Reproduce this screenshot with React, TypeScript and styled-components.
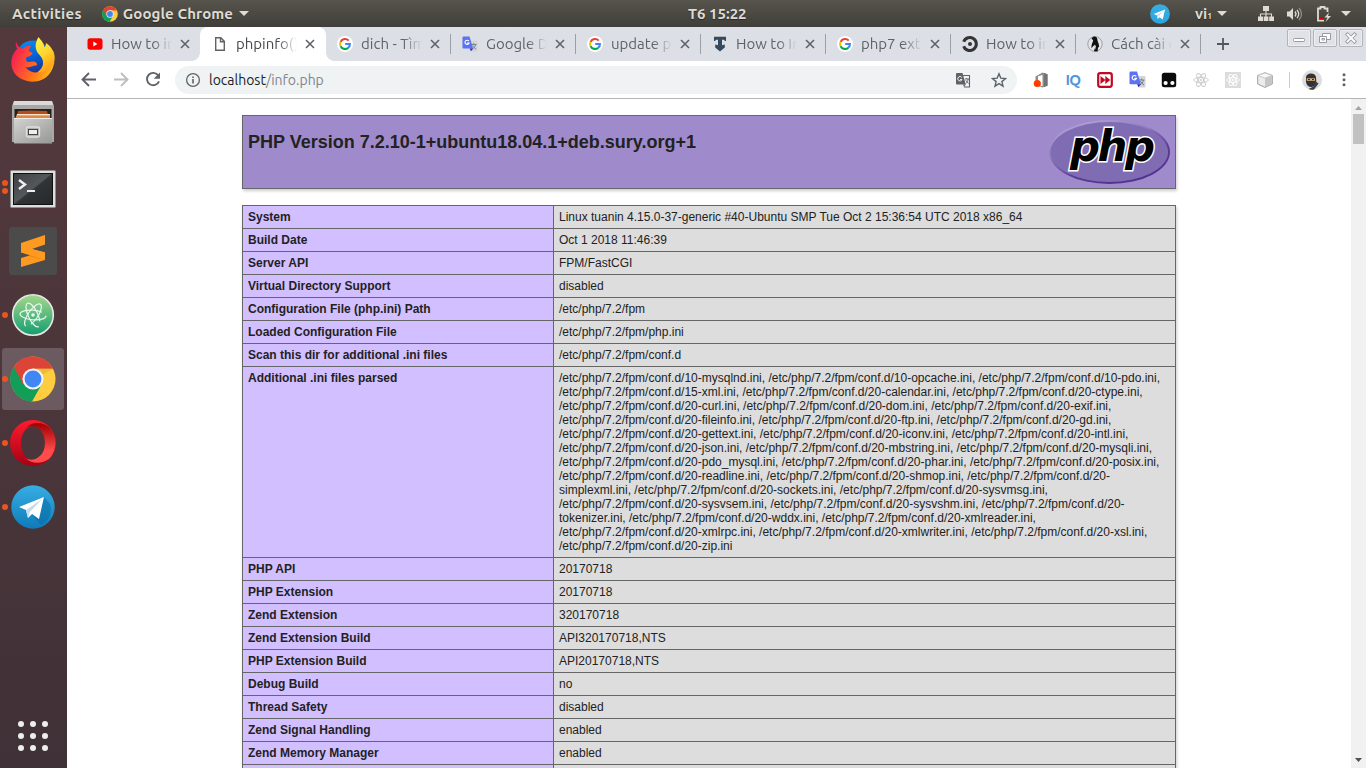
import React from 'react';
import styled, { createGlobalStyle } from 'styled-components';

const UI_FONT = '"Ubuntu", "Noto Sans", "Open Sans", sans-serif';

const GlobalStyle = createGlobalStyle`
  * { box-sizing: border-box; }
  html, body { margin: 0; padding: 0; }
  body { width: 1366px; height: 768px; overflow: hidden; background: #fff; }
  svg { display: block; flex: none; }
`;

const Desktop = styled.div`
  display: flex;
  flex-direction: column;
  width: 1366px;
  height: 768px;
  overflow: hidden;
  font-family: ${UI_FONT};
`;

/* ---------- top bar ---------- */
const TopBar = styled.header`
  display: flex;
  align-items: center;
  height: 27px;
  flex: none;
  padding: 0 15px 0 12px;
  color: #dfdbd2;
  font-size: 15px;
  font-weight: 700;
  line-height: 26px;
  background: linear-gradient(#57544d, #3f3e39);
  text-shadow: 0 1px 1px #2a2925;
`;
const BarLeft = styled.div`
  display: flex;
  align-items: center;
  width: 676px;
`;
const BarLabel = styled.span<{ $track?: number; $left?: number; $right?: number }>`
  letter-spacing: ${p => p.$track ?? 0}px;
  margin-left: ${p => p.$left ?? 0}px;
  margin-right: ${p => p.$right ?? 0}px;
  white-space: nowrap;
`;
const BarRight = styled.div`
  display: flex;
  align-items: center;
  margin-left: auto;
`;
const TrayIcon = styled.span<{ $left: number; $right?: number }>`
  margin: 0 ${p => p.$right ?? 0}px 0 ${p => p.$left}px;
`;
const Caret = styled.i`
  width: 0;
  height: 0;
  border: 5px solid transparent;
  border-top-color: #dfdbd2;
  border-bottom: 0;
`;
const InputLabel = styled.span`
  width: 18px;
  margin: 2px 4px 0 25px;
  font-size: 15px;
  white-space: nowrap;
`;
const Subscript = styled.small`
  font-size: 8.5px;
`;

/* ---------- dock ---------- */
const Workspace = styled.div`
  display: flex;
  flex: 1;
  min-height: 0;
`;
const Dock = styled.nav`
  display: flex;
  flex-direction: column;
  width: 67px;
  flex: none;
  gap: 2px;
  padding: 1px 0 1px 2px;
  background: linear-gradient(#54393c, #4e373b 30%, #49353a 60%, #3f3137);
`;
const DockItem = styled.div<{ $active?: boolean; $drop?: number }>`
  position: relative;
  display: flex;
  align-items: center;
  justify-content: center;
  width: 62px;
  height: 62px;
  padding-top: ${p => p.$drop ?? 0}px;
  border-radius: 3px;
  background: ${p => (p.$active ? '#6b5a5f' : 'transparent')};
`;
const Pips = styled.div`
  position: absolute;
  left: 0;
  top: 0;
  height: 100%;
  display: flex;
  flex-direction: column;
  justify-content: center;
  gap: 2px;
`;
const Pip = styled.i`
  width: 6px;
  height: 6px;
  border-radius: 50%;
  background: #e95420;
`;
const AppGrid = styled.div`
  display: grid;
  grid-template-columns: repeat(3, 6px);
  gap: 6px;
  margin: auto 0 16px 16px;
`;
const GridDot = styled.i`
  width: 6px;
  height: 6px;
  border-radius: 50%;
  background: #eeeeec;
`;

/* ---------- browser ---------- */
const Browser = styled.main`
  display: flex;
  flex-direction: column;
  flex: 1;
  min-width: 0;
`;
const TabStrip = styled.div`
  display: flex;
  height: 34px;
  flex: none;
  padding-left: 9px;
  background: #dcdfe6;
`;
const Tab = styled.div<{ $active?: boolean; $line?: boolean }>`
  position: relative;
  display: flex;
  align-items: center;
  width: 125px;
  flex: none;
  padding-left: 11px;
  color: ${p => (p.$active ? '#45494d' : '#5f6368')};
  background: ${p => (p.$active ? '#fff' : 'transparent')};
  box-shadow: ${p => (p.$active ? '-1px 0 0 #fff' : 'none')};
  border-radius: 8px 8px 0 0;
  &::before {
    content: '';
    display: ${p => (p.$active ? 'block' : 'none')};
    position: absolute;
    left: -9px;
    bottom: 0;
    width: 142px;
    height: 8px;
    background:
      radial-gradient(circle at 0 0, transparent 7.5px, #fff 8px) left / 8px 8px no-repeat,
      radial-gradient(circle at 100% 0, transparent 7.5px, #fff 8px) right / 8px 8px no-repeat;
  }
  &::after {
    content: '';
    display: ${p => (p.$line ? 'block' : 'none')};
    position: absolute;
    right: 0;
    top: 7px;
    width: 1px;
    height: 20px;
    background: #9a9ea6;
  }
`;
const TabTitle = styled.span`
  width: 62px;
  margin-left: 8px;
  overflow: hidden;
  white-space: nowrap;
  font-size: 15px;
  line-height: 20px;
  mask-image: linear-gradient(90deg, #000 42px, transparent 61px);
`;
const CloseMark = styled.svg`
  margin-left: 7px;
`;
const NewTab = styled.svg`
  margin: 11px 0 0 16px;
`;
const WindowButtons = styled.div`
  display: flex;
  gap: 2px;
  margin: 2px 3px 0 auto;
`;
const WindowButton = styled.div`
  display: flex;
  align-items: center;
  justify-content: center;
  width: 24px;
  height: 18px;
  border: 1px solid #b2b4ba;
  border-radius: 2px;
  background: #e0e2e8;
  box-shadow: inset 0 0 0 1px #eceef2;
`;
const Toolbar = styled.div`
  display: flex;
  align-items: center;
  height: 38px;
  flex: none;
  border-bottom: 1px solid #b4b5b7;
  background: #fff;
`;
const NavButtons = styled.div`
  display: flex;
  gap: 12px;
  width: 108px;
  padding-left: 12px;
`;
const AddressBar = styled.div`
  display: flex;
  align-items: center;
  width: 842px;
  height: 28px;
  border-radius: 14px;
  padding: 0 10px;
  background: #eff3f4;
`;
const Url = styled.span`
  flex: 1;
  margin-left: 8px;
  font-size: 14px;
  line-height: 20px;
  color: #202124;
  white-space: nowrap;
`;
const UrlPath = styled.span`
  color: #80868b;
`;
const StarSlot = styled.div`
  margin-left: 20px;
`;
const Extensions = styled.div`
  display: flex;
  margin-left: 8px;
`;
const ExtensionSlot = styled.div`
  display: flex;
  align-items: center;
  justify-content: center;
  width: 32px;
  height: 22px;
`;
const ExtLetters = styled.span`
  color: #5294da;
  font: 700 15px/20px ${UI_FONT};
  letter-spacing: -0.6px;
`;
const Divider = styled.i`
  width: 1px;
  height: 16px;
  margin: 0 12px 0 8px;
  background: #c9cbcf;
`;
const MenuSlot = styled.div`
  margin-left: 14px;
`;

/* ---------- page ---------- */
const Viewport = styled.div`
  display: flex;
  flex: 1;
  min-height: 0;
  overflow: hidden;
`;
const Page = styled.div`
  display: flex;
  flex-direction: column;
  align-items: center;
  flex: 1;
  gap: 16px;
  padding-top: 16px;
  overflow: hidden;
  background: #fff;
  color: #222;
  font: 12px/14px "Liberation Sans", Arial, sans-serif;
`;
const PhpHeader = styled.div`
  display: flex;
  justify-content: space-between;
  width: 934px;
  height: 74px;
  flex: none;
  padding: 4px 5px;
  border: 1px solid #666;
  background: #9f8bcb;
  box-shadow: 1px 2px 3px #ccc;
`;
const PhpTitle = styled.h1`
  margin: 12px 0 0;
  font-size: 18px;
  line-height: 20px;
`;
const InfoTable = styled.table`
  width: 934px;
  flex: none;
  table-layout: fixed;
  border-collapse: collapse;
  box-shadow: 1px 2px 3px #ccc;
`;
const KeyCell = styled.td`
  width: 311px;
  padding: 4px 5px;
  border: 1px solid #666;
  vertical-align: top;
  font-weight: 700;
  background: #d2bfff;
`;
const ValueCell = styled.td`
  padding: 4px 5px;
  border: 1px solid #666;
  vertical-align: top;
  background: #ddd;
  overflow-wrap: break-word;
`;
const Scrollbar = styled.div`
  display: flex;
  flex-direction: column;
  align-items: center;
  width: 15px;
  background: #f1f1f1;
`;
const ScrollThumb = styled.div`
  width: 11px;
  height: 30px;
  margin: 4px 0 auto;
  background: #c1c1c1;
`;
const ScrollArrow = styled.i<{ $down?: boolean }>`
  width: 7px;
  height: 4px;
  margin: ${p => (p.$down ? '0 0 6px' : '7px 0 0')};
  background: ${p => (p.$down ? '#505050' : '#a3a3a3')};
  clip-path: ${p => (p.$down ? 'polygon(0 0, 100% 0, 50% 100%)' : 'polygon(0 100%, 100% 100%, 50% 0)')};
`;

/* ---------- drawings ---------- */
const ChromeIcon = ({ size }: { size: number }) => (
  <svg width={size} height={size} viewBox="0 0 48 48">
    <circle cx="24" cy="24" r="23.5" fill="#fdcc3f" />
    <path d="M24 24 4 11.5A23.5 23.5 0 0 0 23 47.5L34 28z" fill="#129d58" />
    <path d="M24 24 4 11.5A23.5 23.5 0 0 1 45 13.4H24z" fill="#dc4437" />
    <path d="M4 11.500 24 13.400 14 30z" fill="#dc4437" />
    <path d="M24 13.400H45L34.500 19z" fill="#e2b02f" opacity=".6" />
    <circle cx="24" cy="24" r="11" fill="#f3f3f3" />
    <circle cx="24" cy="24" r="8.800" fill="#4285f4" />
  </svg>
);

const TelegramIcon = ({ size, id }: { size: number; id: string }) => (
  <svg width={size} height={size} viewBox="0 0 44 44">
    <defs>
      <linearGradient id={id} x1="0" y1="0" x2="0" y2="1">
        <stop offset="0" stopColor="#37aee2" />
        <stop offset="1" stopColor={size > 30 ? '#0e7bb8' : '#2ca5e0'} />
      </linearGradient>
    </defs>
    <circle cx="22" cy="22" r="21.700" fill={`url(#${id})`} />
    {size > 30 && <path d="M33 12l6 7c3 10-3 19-9 21l-9-10z" fill="#076da8" opacity=".55" />}
    <path d="M8 22 33 12 28 34 21 29 17 33 15 25z" fill="#fff" />
    <path d="M15 25 31 14 19 27 17 33z" fill="#c5dcea" />
  </svg>
);

const GoogleIcon = () => (
  <svg width="16" height="16" viewBox="0 0 16 16">
    <circle cx="8" cy="8" r="8" fill="#fff" />
    <g fill="none" strokeWidth="2.100">
      <path d="M11.700 4.600A4.900 4.900 0 0 0 3.600 5.900" stroke="#ea4335" />
      <path d="M3.600 5.900a4.900 4.900 0 0 0 0 4.400" stroke="#fbbc05" />
      <path d="M3.600 10.200a4.900 4.900 0 0 0 7.700 1.500" stroke="#00ac47" />
      <path d="M11.200 11.800A4.700 4.700 0 0 0 12.900 8H8.200" stroke="#4285f4" />
    </g>
  </svg>
);

const TranslateIcon = ({ size = 17 }: { size?: number }) => (
  <svg width={size} height={size} viewBox="0 0 17 17">
    <path d="M7 5h8.500a1 1 0 0 1 1 1v9.500a1 1 0 0 1-1 1H10z" fill="#d3d4d8" />
    <path d="M9.500 9h6M12.500 7.500V9M14.500 9c-.5 2.500-2 4-3.500 5M11.500 10c.5 1.500 2 3 3.500 4" stroke="#70848b" fill="none" />
    <path d="M1.500.500H8l3.800 12.800H1.500a1 1 0 0 1-1-1V1.500a1 1 0 0 1 1-1z" fill="#5b72f2" />
    <path d="M8 13.300h3.800l-2.200 3z" fill="#4026b8" />
    <path d="M7.200 5.400A2.200 2.200 0 1 0 7.500 7.400H5.400" stroke="#fff" strokeWidth="1.200" fill="none" />
  </svg>
);

const YoutubeIcon = () => (
  <svg width="16" height="16" viewBox="0 0 16 16">
    <rect x=".5" y="2.300" width="15" height="11.400" rx="2.600" fill="#f00" />
    <path d="M6.300 5.600v4.800L10.400 8z" fill="#fff" />
  </svg>
);

const PageIcon = () => (
  <svg width="16" height="16" viewBox="0 0 16 16" fill="none" stroke="#5f6368" strokeWidth="1.400">
    <path d="M3.700 1.700h5.100l3.500 3.700v8.900H3.700z" />
    <path d="M8.500 1.700v4h3.800" />
  </svg>
);

const TecmintIcon = () => (
  <svg width="16" height="16" viewBox="0 0 16 16" fill="#34495e">
    <path d="M2 .800h12v4.200h-1l-1-1.200H4L3 5H2z" />
    <path d="M6 3h4v6.200l2.800-.7v3L8 15.500 3.200 11.500v-3l2.800.700z" />
  </svg>
);

const CircleIcon = () => (
  <svg width="16" height="16" viewBox="0 0 16 16" fill="none" stroke="#343434">
    <path d="M1.700 5.800a6.500 6.500 0 1 1 0 4.400" strokeWidth="3" />
    <circle cx="8" cy="8" r="2" fill="#343434" stroke="none" />
  </svg>
);

const PenguinIcon = () => (
  <svg width="16" height="16" viewBox="0 0 16 16">
    <ellipse cx="8" cy="8" rx="7.200" ry="7.400" fill="#e4e5e9" stroke="#8d8f93" strokeWidth=".8" />
    <path d="M5.500 1.200c2.200-1.500 4.800-.2 4.900 2.500.1 2 1.900 4 1.700 7.300l-1.100.5-.4 4-3.600-.2.800-3.300-1.300-2.500-2 2.700C4 9 5.600 7 6.200 4.200L4.500 2.800z" fill="#111" />
    <path d="M7.300 8.500l-.3 3 1.200 2L9 10z" fill="#dfe0e4" />
  </svg>
);

const FirefoxIcon = () => (
  <svg width="46" height="46" viewBox="0 0 46 46">
    <defs>
      <linearGradient id="ffBody" x1="0" y1=".3" x2="1" y2=".7">
        <stop offset="0" stopColor="#f21b57" />
        <stop offset=".35" stopColor="#ff4b35" />
        <stop offset=".65" stopColor="#ff7a17" />
        <stop offset="1" stopColor="#ffbd1c" />
      </linearGradient>
      <linearGradient id="ffTail" x1=".2" y1="0" x2=".6" y2="1">
        <stop offset="0" stopColor="#fff34a" />
        <stop offset=".5" stopColor="#ffd52b" />
        <stop offset="1" stopColor="#ff9a12" />
      </linearGradient>
      <linearGradient id="ffGlobe" x1=".3" y1="0" x2=".6" y2="1">
        <stop offset="0" stopColor="#0a8bf0" />
        <stop offset=".6" stopColor="#0757c9" />
        <stop offset="1" stopColor="#2a2b84" />
      </linearGradient>
    </defs>
    <circle cx="23" cy="21.500" r="17" fill="url(#ffGlobe)" />
    <path d="M6 5.500c-.5 3 0 5 1.200 7C-1.500 22 .2 33 6.500 39.500c9 8.500 24.500 8 32-.5C44.500 32 46 23 43 15c-1 6-2.500 9-5 11-3 8-10 12.500-17 9.500-2.700-1.200-4.500-2.700-5.500-4.500 4 1.500 7-1.500 10-1.500 1.500 0 2-1.700.7-2.800-2.200-1.900-5.200-.9-8.200-.6-2-.8-2.500-3-1.500-5 1.800-.3 4-1 6-3.300.7-1.500-2-1.800-3.700-2.600.2-2.300 1-3.800 2.200-5.200-3-.5-6 .5-8 2.500-3 0-5.500-2.500-7-7z" fill="url(#ffBody)" />
    <path d="M28.500 1c-5.500 9-2 15 1.500 18.500C36 26 32.500 33 27 36.500c9.500-.5 16.500-6.500 17.500-14.500.5-5-2.500-11-8.500-15-.1 2-.6 3-1.500 4.500C34 6.500 31 4.500 28.500 1z" fill="url(#ffTail)" />
  </svg>
);

const FilesIcon = () => (
  <svg width="44" height="46" viewBox="0 0 44 46">
    <defs>
      <linearGradient id="cabinet" x1="0" y1="0" x2="1" y2="1">
        <stop offset="0" stopColor="#d2d2d0" />
        <stop offset="1" stopColor="#969694" />
      </linearGradient>
    </defs>
    <path d="M3 1h38l2 5v36H1V6z" fill="#a7a7a5" />
    <path d="M3 1h38l1 4H2z" fill="#dadad8" />
    <rect x="3.500" y="9" width="37" height="10" fill="#26201e" />
    <path d="M7 11l13-.5 16 .5 2 8H5z" fill="#b34e1d" />
    <path d="M6 14h33v5H4z" fill="#eda36c" />
    <path d="M6 14.500h33" stroke="#fbe5c9" />
    <path d="M5 17h34" stroke="#d36d29" />
    <path d="M3 19h38v25H3z" fill="url(#cabinet)" />
    <path d="M3 18.500h38" stroke="#ededeb" />
    <path d="M3 43.500h38" stroke="#72726f" />
    <rect x="15.500" y="27" width="13" height="10" rx="1.500" fill="#b0b0ae" stroke="#e0e0de" strokeWidth="1.300" />
    <rect x="17.500" y="29.500" width="9" height="5" fill="#eee" stroke="#454543" />
  </svg>
);

const TerminalIcon = () => (
  <svg width="46" height="38" viewBox="0 0 46 38">
    <defs>
      <linearGradient id="screen" x1="0" y1="0" x2="1" y2="1">
        <stop offset="0" stopColor="#3d4143" />
        <stop offset=".48" stopColor="#54585a" />
        <stop offset=".52" stopColor="#303436" />
        <stop offset="1" stopColor="#25292a" />
      </linearGradient>
    </defs>
    <rect x=".5" y=".5" width="45" height="37" rx="1" fill="#dededc" stroke="#8d8d8b" />
    <rect x="3.500" y="3.500" width="39" height="31" fill="url(#screen)" stroke="#0f1112" />
    <path d="M9 10l6 4.500-6 4.500" stroke="#eee" strokeWidth="2.400" fill="none" />
    <path d="M17 21h8" stroke="#eee" strokeWidth="2" />
  </svg>
);

const SublimeIcon = () => (
  <svg width="48" height="48" viewBox="0 0 48 48">
    <rect width="48" height="48" rx="3" fill="#4b4b4b" />
    <path d="M12 16 36 8v9.500l-13 4.500 13 3.500V33L12 40V31l12-3.500L12 25.500z" fill="#ff9a21" />
    <path d="M19 29 33 24.700l3 1v7.300z" fill="#e8820f" />
    <path d="M12 25.500 23 22l13 3.500V33z" fill="#ff9a21" />
  </svg>
);

const AtomIcon = () => (
  <svg width="44" height="44" viewBox="0 0 44 44">
    <defs>
      <linearGradient id="atomBg" x1="0" y1="0" x2="0" y2="1">
        <stop offset="0" stopColor="#a4d88c" />
        <stop offset="1" stopColor="#149d70" />
      </linearGradient>
    </defs>
    <circle cx="22" cy="22" r="20.300" fill="url(#atomBg)" stroke="#e8e8e6" strokeWidth="1.600" />
    <g fill="none" stroke="#e8f7ee" strokeWidth="1.200" strokeLinecap="round">
      <ellipse cx="22" cy="22" rx="13" ry="4.800" transform="rotate(5 22 22)" strokeDasharray="52 7" />
      <ellipse cx="22" cy="22" rx="13" ry="4.800" transform="rotate(65 22 22)" strokeDasharray="52 7" />
      <ellipse cx="22" cy="22" rx="13" ry="4.800" transform="rotate(125 22 22)" strokeDasharray="52 7" />
      <circle cx="22" cy="22" r="1.200" fill="#e8f7ee" />
    </g>
  </svg>
);

const OperaIcon = () => (
  <svg width="48" height="48" viewBox="0 0 48 48">
    <defs>
      <linearGradient id="operaLeft" x1="0" y1="0" x2="0" y2="1">
        <stop offset="0" stopColor="#ff1b2d" />
        <stop offset="1" stopColor="#a70014" />
      </linearGradient>
      <linearGradient id="operaRight" x1="0" y1="0" x2="0" y2="1">
        <stop offset="0" stopColor="#9c0000" />
        <stop offset=".7" stopColor="#ff4b4b" />
      </linearGradient>
    </defs>
    <path fillRule="evenodd" d="M24 1a23 23 0 1 0 0 46 23 23 0 0 0 0-46zm0 6c6.500 0 12 7.500 12 17s-5.500 17-12 17-12-7.500-12-17S17.500 7 24 7z" fill="url(#operaLeft)" />
    <path d="M17 8.500C25 1 35 4 40 8a23 23 0 0 1 0 32c-7 5-17 5-23-.5 7 3.500 19-1 19-15.500S25 4.500 17 8.500z" fill="url(#operaRight)" />
  </svg>
);

const NetworkIcon = () => (
  <svg width="16" height="16" viewBox="0 0 16 16" fill="#dfdbd2">
    <path d="M5 0h6v5H5zM0 10.500h5V15H0zM5.700 10.500h4.700V15H5.700zM11.200 10.500H16V15h-4.800z" />
    <path d="M2.500 11V8h11v3M8 4v7" fill="none" stroke="#dfdbd2" strokeWidth="1.100" />
  </svg>
);

const VolumeIcon = () => (
  <svg width="16" height="16" viewBox="0 0 16 16">
    <path d="M1 5.500h2.500L7 2v12l-3.500-3.500H1z" fill="#dfdbd2" />
    <path d="M9 5.500q2 2.500 0 5M11 3.800q3.400 4.200 0 8.400" fill="none" stroke="#dfdbd2" strokeWidth="1.300" />
    <path d="M13 2q5 6 0 12" fill="none" stroke="#908d86" strokeWidth="1.200" />
  </svg>
);

const BatteryIcon = () => (
  <svg width="16" height="16" viewBox="0 0 16 16">
    <path d="M8 14.700H2V2.500h2.500v-1.500h4v1.500H11.500V6" fill="none" stroke="#dfdbd2" strokeWidth="1.800" />
    <path d="M3.500 11h4v2.500h-4z" fill="#d00" />
    <path d="M13 6.500 8.500 11.500h3L9.500 16l5.500-6h-3z" fill="#dfdbd2" />
  </svg>
);

const BackIcon = ({ forward }: { forward?: boolean }) => (
  <svg width="20" height="20" viewBox="0 0 20 20" fill="none" stroke={forward ? '#bcbec1' : '#5f6368'} strokeWidth="1.900">
    <path d={forward ? 'M3 9.500h13.500M10 3 16.500 9.500 10 16' : 'M17 9.500H3.500M10 3 3.500 9.500 10 16'} />
  </svg>
);

const ReloadIcon = () => (
  <svg width="20" height="20" viewBox="0 0 20 20">
    <path d="M15.300 5.500A6.200 6.200 0 1 0 16 11.300" fill="none" stroke="#5f6368" strokeWidth="1.900" />
    <path d="M17 2.500v6.300h-6.300z" fill="#5f6368" />
  </svg>
);

const InfoIcon = () => (
  <svg width="16" height="16" viewBox="0 0 16 16" fill="none" stroke="#5f6368">
    <circle cx="8" cy="8" r="6.400" strokeWidth="1.300" />
    <path d="M8 7v4.500M8 4.400v1.500" strokeWidth="1.600" />
  </svg>
);

const PageTranslateIcon = () => (
  <svg width="16" height="16" viewBox="0 0 16 16">
    <path d="M7 3.500h7.500V15H9" fill="#f3f5f5" stroke="#5f6368" strokeWidth="1.100" />
    <path d="M2 1h5.500l3.300 11.500H2a1 1 0 0 1-1-1V2a1 1 0 0 1 1-1z" fill="#5f6368" />
    <path d="M8 12.500h2.800L9 15z" fill="#5f6368" />
    <path d="M6.800 5.500A2.200 2.200 0 1 0 7 7.600H5" stroke="#eef2f3" strokeWidth="1" fill="none" />
    <path d="M9.800 7H14M11.800 6v1M13.200 7c-.3 2-1.200 3.200-2.200 4.500M10.800 8.200l2.700 3.300" stroke="#5f6368" strokeWidth=".9" fill="none" />
  </svg>
);

const StarIcon = () => (
  <svg width="16" height="16" viewBox="0 0 16 16">
    <path d="M8 1.800l1.800 4.300 4.700.4-3.600 3.100 1.100 4.600L8 11.700l-4 2.500 1.100-4.600L1.500 6.500l4.700-.4z" fill="none" stroke="#5f6368" strokeWidth="1.400" />
  </svg>
);

const OfficeIcon = () => (
  <svg width="16" height="16" viewBox="0 0 16 16">
    <path d="M2.500 4.500 9.500.500l5 1.700v11.600l-5 1.700-5-2 5 .5V3L5 4.200v5H2.500z" fill="#8c8c8c" />
    <path d="M11 1l3.500 1.200v11.600L11 15z" fill="#737373" />
    <circle cx="4.300" cy="11.500" r="3.600" fill="#ff3d00" />
  </svg>
);

const ForwardExtIcon = () => (
  <svg width="16" height="16" viewBox="0 0 16 16">
    <rect x="1.200" y="1.200" width="13.600" height="13.600" rx="2" fill="#fff" stroke="#bf0a21" strokeWidth="2.200" />
    <path d="M3.500 4l5 4-5 4zM8.300 4l5 4-5 4z" fill="#bf0a21" />
  </svg>
);

const MonkeyIcon = () => (
  <svg width="16" height="16" viewBox="0 0 16 16">
    <rect x=".8" y=".8" width="14.400" height="14.400" rx="2.500" fill="#0b0b0b" />
    <circle cx="4.600" cy="11" r="2.100" fill="#fff" />
    <circle cx="11.400" cy="11" r="2.100" fill="#fff" />
  </svg>
);

const ReactExtIcon = ({ boxed }: { boxed?: boolean }) => (
  <svg width="16" height="16" viewBox="0 0 16 16" fill="none" stroke={boxed ? '#fff' : '#c8c9cb'} strokeWidth=".9">
    {boxed && <rect width="16" height="16" fill="#dcdcdc" stroke="none" />}
    <ellipse cx="8" cy="8" rx={boxed ? 6.200 : 7.300} ry="2.600" />
    <ellipse cx="8" cy="8" rx={boxed ? 6.200 : 7.300} ry="2.600" transform="rotate(60 8 8)" />
    <ellipse cx="8" cy="8" rx={boxed ? 6.200 : 7.300} ry="2.600" transform="rotate(120 8 8)" />
    <circle cx="8" cy="8" r=".9" />
  </svg>
);

const CubeIcon = () => (
  <svg width="16" height="16" viewBox="0 0 16 16" stroke="#939393" strokeWidth=".9" strokeLinejoin="round">
    <path d="M8 .7 15.300 3.500v8.500L8 15.400.700 12V3.500z" fill="#ececec" />
    <path d="M.9 3.500 8 6.200 15.100 3.500 8 .9z" fill="#f7f7f7" stroke="#c5c5c5" />
    <path d="M8 6.200v8.800L14.900 11.800V3.700z" fill="#c6c6c6" stroke="none" />
  </svg>
);

const NinjaAvatar = () => (
  <svg width="20" height="20" viewBox="0 0 20 20">
    <circle cx="10" cy="10" r="10" fill="#dcdcdc" />
    <path d="M4 7c.5-4.500 9-5 10 0l.3 5.500c-.8 3-3 4.500-5.300 4.500s-4.500-1.500-5-5z" fill="#2e3338" />
    <path d="M4.800 8.300h8.200v2.500H4.800z" fill="#e2ad75" />
    <path d="M6 9.500h1.800M10 9.500h1.800" stroke="#222" />
    <path d="M13 11l3.500 2.500L12 19.500c-2 .5-4 .3-5.500-.5l5-2.500z" fill="#3a3f43" />
  </svg>
);

const MoreIcon = () => (
  <svg width="16" height="16" viewBox="0 0 16 16" fill="#5f6368">
    <circle cx="8" cy="2.800" r="1.500" />
    <circle cx="8" cy="7.800" r="1.500" />
    <circle cx="8" cy="12.800" r="1.500" />
  </svg>
);

const MinimizeGlyph = () => (
  <svg width="14" height="12" viewBox="0 0 14 12">
    <rect x="1.500" y="6.500" width="11" height="3" rx="1" fill="#fff" stroke="#979aa1" />
  </svg>
);
const RestoreGlyph = () => (
  <svg width="14" height="12" viewBox="0 0 14 12" fill="#fff" stroke="#979aa1">
    <path d="M4.500 1.500h8v6h-8z" />
    <path d="M1.500 4.500h7v6h-7z" />
    <path d="M4 6.500h2.500V8H4z" />
  </svg>
);
const CloseGlyph = () => (
  <svg width="14" height="12" viewBox="0 0 14 12">
    <path d="M3.500 2.500l7 7M10.500 2.500l-7 7" stroke="#979aa1" strokeWidth="3.600" strokeLinecap="square" />
    <path d="M3.500 2.500l7 7M10.500 2.500l-7 7" stroke="#fff" strokeWidth="1.900" strokeLinecap="square" />
  </svg>
);

const PhpLogo = () => (
  <svg width="121" height="64" viewBox="0 0 121 64">
    <defs>
      <linearGradient id="phpRim" x1=".2" y1="0" x2=".8" y2="1">
        <stop offset="0" stopColor="#b5a9dc" />
        <stop offset=".35" stopColor="#8d7bc0" />
        <stop offset=".65" stopColor="#5a3b96" />
        <stop offset="1" stopColor="#4f2f8b" />
      </linearGradient>
    </defs>
    <ellipse cx="60.500" cy="32" rx="60.500" ry="32" fill="url(#phpRim)" />
    <ellipse cx="60.300" cy="32" rx="58.800" ry="30" fill="#7f6cb3" />
    <text
      x="21"
      y="41"
      fontFamily='"DejaVu Sans", sans-serif'
      fontSize="42"
      fontWeight="700"
      fontStyle="italic"
      textLength="85"
      lengthAdjust="spacing"
      fill="#000"
      stroke="#fff"
      strokeWidth="3"
      strokeLinejoin="miter"
      paintOrder="stroke"
    >
      php
    </text>
  </svg>
);

/* ---------- data ---------- */
const dockApps: { icon: React.ReactNode; pips: number; active?: boolean; drop?: number }[] = [
  { icon: <FirefoxIcon />, pips: 0 },
  { icon: <FilesIcon />, pips: 0 },
  { icon: <TerminalIcon />, pips: 2, drop: 4 },
  { icon: <SublimeIcon />, pips: 0 },
  { icon: <AtomIcon />, pips: 1 },
  { icon: <ChromeIcon size={46} />, pips: 1, active: true },
  { icon: <OperaIcon />, pips: 1 },
  { icon: <TelegramIcon size={44} id="tgDock" />, pips: 1 },
];

const tabs: { icon: React.ReactNode; title: string; active?: boolean; line?: boolean }[] = [
  { icon: <YoutubeIcon />, title: 'How to install' },
  { icon: <PageIcon />, title: 'phpinfo()', active: true },
  { icon: <GoogleIcon />, title: 'dich - Tìm kiếm', line: true },
  { icon: <TranslateIcon size={16} />, title: 'Google Dịch', line: true },
  { icon: <GoogleIcon />, title: 'update php', line: true },
  { icon: <TecmintIcon />, title: 'How to Install', line: true },
  { icon: <GoogleIcon />, title: 'php7 extension', line: true },
  { icon: <CircleIcon />, title: 'How to install', line: true },
  { icon: <PenguinIcon />, title: 'Cách cài đặt', line: true },
];

const extensions: React.ReactNode[] = [
  <OfficeIcon />,
  <ExtLetters>IQ</ExtLetters>,
  <ForwardExtIcon />,
  <TranslateIcon />,
  <MonkeyIcon />,
  <ReactExtIcon />,
  <ReactExtIcon boxed />,
  <CubeIcon />,
];

const confDir = '/etc/php/7.2/fpm/conf.d/';
const iniFiles = [
  '10-mysqlnd', '10-opcache', '10-pdo', '15-xml', '20-calendar', '20-ctype', '20-curl', '20-dom', '20-exif',
  '20-fileinfo', '20-ftp', '20-gd', '20-gettext', '20-iconv', '20-intl', '20-json', '20-mbstring', '20-mysqli',
  '20-pdo_mysql', '20-phar', '20-posix', '20-readline', '20-shmop', '20-simplexml', '20-sockets', '20-sysvmsg',
  '20-sysvsem', '20-sysvshm', '20-tokenizer', '20-wddx', '20-xmlreader', '20-xmlrpc', '20-xmlwriter', '20-xsl', '20-zip',
].map(name => `${confDir}${name}.ini`).join(', ');

const rows: [string, string][] = [
  ['System', 'Linux tuanin 4.15.0-37-generic #40-Ubuntu SMP Tue Oct 2 15:36:54 UTC 2018 x86_64'],
  ['Build Date', 'Oct 1 2018 11:46:39'],
  ['Server API', 'FPM/FastCGI'],
  ['Virtual Directory Support', 'disabled'],
  ['Configuration File (php.ini) Path', '/etc/php/7.2/fpm'],
  ['Loaded Configuration File', '/etc/php/7.2/fpm/php.ini'],
  ['Scan this dir for additional .ini files', '/etc/php/7.2/fpm/conf.d'],
  ['Additional .ini files parsed', iniFiles],
  ['PHP API', '20170718'],
  ['PHP Extension', '20170718'],
  ['Zend Extension', '320170718'],
  ['Zend Extension Build', 'API320170718,NTS'],
  ['PHP Extension Build', 'API20170718,NTS'],
  ['Debug Build', 'no'],
  ['Thread Safety', 'disabled'],
  ['Zend Signal Handling', 'enabled'],
  ['Zend Memory Manager', 'enabled'],
  ['', ''],
];

export default function App() {
  return (
    <Desktop>
      <GlobalStyle />
      <TopBar>
        <BarLeft>
          <BarLabel $track={0.3} $right={20}>Activities</BarLabel>
          <ChromeIcon size={16} />
          <BarLabel $track={0.1} $left={5} $right={6}>Google Chrome</BarLabel>
          <Caret />
        </BarLeft>
        <BarLabel>T6 15:22</BarLabel>
        <BarRight>
          <TelegramIcon size={20} id="tgTray" />
          <InputLabel>vi<Subscript>1</Subscript></InputLabel>
          <Caret />
          <TrayIcon $left={31}><NetworkIcon /></TrayIcon>
          <TrayIcon $left={12}><VolumeIcon /></TrayIcon>
          <TrayIcon $left={14} $right={9}><BatteryIcon /></TrayIcon>
          <Caret />
        </BarRight>
      </TopBar>
      <Workspace>
        <Dock>
          {dockApps.map((app, i) => (
            <DockItem key={i} $active={app.active} $drop={app.drop}>
              <Pips>{Array.from({ length: app.pips }, (_, n) => <Pip key={n} />)}</Pips>
              {app.icon}
            </DockItem>
          ))}
          <AppGrid>{Array.from({ length: 9 }, (_, n) => <GridDot key={n} />)}</AppGrid>
        </Dock>
        <Browser>
          <TabStrip>
            {tabs.map((tab, i) => (
              <Tab key={i} $active={tab.active} $line={tab.line}>
                {tab.icon}
                <TabTitle>{tab.title}</TabTitle>
                <CloseMark width="10" height="10" viewBox="0 0 10 10">
                  <path d="M1 1l8 8M9 1l-8 8" stroke="#5f6368" strokeWidth="1.600" />
                </CloseMark>
              </Tab>
            ))}
            <NewTab width="12" height="12" viewBox="0 0 12 12">
              <path d="M6 0v12M0 6h12" stroke="#53575c" strokeWidth="1.800" />
            </NewTab>
            <WindowButtons>
              <WindowButton><MinimizeGlyph /></WindowButton>
              <WindowButton><RestoreGlyph /></WindowButton>
              <WindowButton><CloseGlyph /></WindowButton>
            </WindowButtons>
          </TabStrip>
          <Toolbar>
            <NavButtons>
              <BackIcon />
              <BackIcon forward />
              <ReloadIcon />
            </NavButtons>
            <AddressBar>
              <InfoIcon />
              <Url>localhost<UrlPath>/info.php</UrlPath></Url>
              <PageTranslateIcon />
              <StarSlot><StarIcon /></StarSlot>
            </AddressBar>
            <Extensions>
              {extensions.map((icon, i) => <ExtensionSlot key={i}>{icon}</ExtensionSlot>)}
            </Extensions>
            <Divider />
            <NinjaAvatar />
            <MenuSlot><MoreIcon /></MenuSlot>
          </Toolbar>
          <Viewport>
            <Page>
              <PhpHeader>
                <PhpTitle>PHP Version 7.2.10-1+ubuntu18.04.1+deb.sury.org+1</PhpTitle>
                <PhpLogo />
              </PhpHeader>
              <InfoTable>
                <tbody>
                  {rows.map(([name, value], i) => (
                    <tr key={i}>
                      <KeyCell>{name || '\u00a0'}</KeyCell>
                      <ValueCell>{value}</ValueCell>
                    </tr>
                  ))}
                </tbody>
              </InfoTable>
            </Page>
            <Scrollbar>
              <ScrollArrow />
              <ScrollThumb />
              <ScrollArrow $down />
            </Scrollbar>
          </Viewport>
        </Browser>
      </Workspace>
    </Desktop>
  );
}
